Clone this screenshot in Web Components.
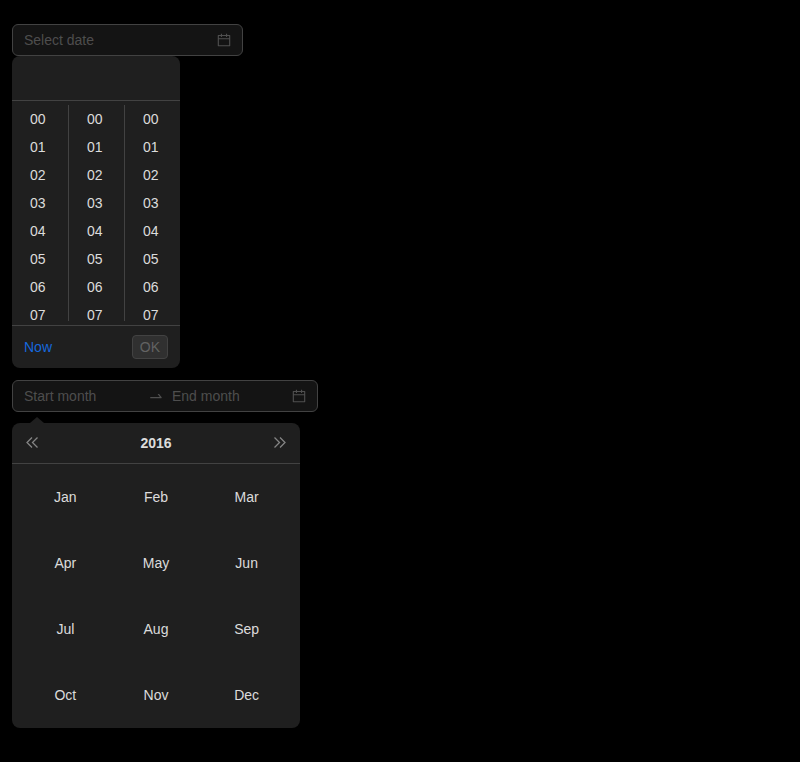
<!DOCTYPE html>
<html>
<head>
<meta charset="utf-8">
<title>Pickers</title>
<style>
    html, body { margin: 0; background: #000; }
    body {
        padding: 24px 12px;
        font: 14px/22px "Liberation Sans", Arial, sans-serif;
        color: rgba(255, 255, 255, .85);
    }
</style>
</head>
<body>

<date-input placeholder="Select date"></date-input>
<time-panel></time-panel>

<date-input start="Start month" end="End month" style="margin-top: 12px"></date-input>
<month-panel year="2016"></month-panel>

<script>
const CALENDAR = `<svg viewBox="64 64 896 896" width="14" height="14" fill="currentColor"><path d="M880 184H712v-64c0-4.4-3.6-8-8-8h-56c-4.4 0-8 3.6-8 8v64H384v-64c0-4.4-3.6-8-8-8h-56c-4.4 0-8 3.6-8 8v64H144c-17.7 0-32 14.3-32 32v664c0 17.7 14.3 32 32 32h736c17.7 0 32-14.3 32-32V216c0-17.7-14.3-32-32-32zm-40 656H184V460h656v380zM184 392V256h128v48c0 4.4 3.6 8 8 8h56c4.4 0 8-3.6 8-8v-48h256v48c0 4.4 3.6 8 8 8h56c4.4 0 8-3.6 8-8v-48h128v136H184z"/></svg>`;
const SWAP_RIGHT = `<svg viewBox="0 0 1024 1024" width="16" height="16" fill="currentColor"><path d="M873.1 596.2l-164-208A32 32 0 0 0 684 376h-64.8c-6.7 0-10.4 7.7-6.3 13l144.3 183H152c-4.4 0-8 3.6-8 8v60c0 4.4 3.6 8 8 8h695.9c26.8 0 41.7-30.8 25.2-51.8z"/></svg>`;

class DateInput extends HTMLElement {
    connectedCallback() {
        if (this.shadowRoot) return;
        const start = this.getAttribute('start');
        const end = this.getAttribute('end');
        const fields = start
            ? `<span class="field">${start}</span><span class="sep">${SWAP_RIGHT}</span><span class="field">${end}</span>`
            : `<span class="field">${this.getAttribute('placeholder')}</span>`;
        this.attachShadow({mode: 'open'});
        this.shadowRoot.innerHTML = `
            <style>
                :host {
                    display: flex;
                    align-items: center;
                    box-sizing: border-box;
                    width: ${start ? 306 : 231}px;
                    height: 32px;
                    padding: 4px 11px;
                    background: #141414;
                    border: 1px solid #424242;
                    border-radius: 6px;
                    color: rgba(255, 255, 255, .25);
                }
                .field { flex: 1; min-width: 0; }
                .sep { display: flex; padding: 0 8px; }
                .icon { display: flex; margin-left: 4px; }
            </style>
            ${fields}
            <span class="icon">${CALENDAR}</span>
        `;
    }
}

class TimePanel extends HTMLElement {
    connectedCallback() {
        if (this.shadowRoot) return;
        let cells = '';
        for (let i = 0; i < 8; i++) cells += `<li>0${i}</li>`;
        this.attachShadow({mode: 'open'});
        this.shadowRoot.innerHTML = `
            <style>
                :host {
                    display: block;
                    width: 168px;
                    background: #1f1f1f;
                    border-radius: 8px;
                }
                header { height: 44px; border-bottom: 1px solid #424242; }
                .columns { display: flex; height: 224px; }
                ul {
                    width: 56px;
                    box-sizing: border-box;
                    margin: 4px 0;
                    padding: 0;
                    list-style: none;
                    overflow: hidden;
                }
                ul + ul { border-left: 1px solid #424242; }
                li { height: 28px; line-height: 28px; padding-left: 18px; }
                footer {
                    display: flex;
                    align-items: center;
                    justify-content: space-between;
                    height: 42px;
                    padding: 0 12px;
                    border-top: 1px solid #424242;
                }
                .now { color: #1668dc; }
                .ok {
                    box-sizing: border-box;
                    height: 24px;
                    padding: 0 7px;
                    line-height: 22px;
                    color: rgba(255, 255, 255, .25);
                    background: rgba(255, 255, 255, .08);
                    border: 1px solid #424242;
                    border-radius: 4px;
                }
            </style>
            <header></header>
            <div class="columns">
                <ul>${cells}</ul>
                <ul>${cells}</ul>
                <ul>${cells}</ul>
            </div>
            <footer><span class="now">Now</span><span class="ok">OK</span></footer>
        `;
    }
}

class MonthPanel extends HTMLElement {
    connectedCallback() {
        if (this.shadowRoot) return;
        const months = ['Jan', 'Feb', 'Mar', 'Apr', 'May', 'Jun', 'Jul', 'Aug', 'Sep', 'Oct', 'Nov', 'Dec'];
        const chevrons = (d) => `<svg width="12" height="12" viewBox="0 0 12 12" fill="none" stroke="currentColor" stroke-width="1.3"><path d="${d}"/></svg>`;
        this.attachShadow({mode: 'open'});
        this.shadowRoot.innerHTML = `
            <style>
                :host {
                    display: block;
                    position: relative;
                    width: 288px;
                    margin-top: 11px;
                    background: #1f1f1f;
                    border-radius: 8px;
                }
                .arrow {
                    position: absolute;
                    left: 18px;
                    top: -6px;
                    width: 14px;
                    height: 6px;
                    background: #1f1f1f;
                    clip-path: polygon(0 100%, 50% 0, 100% 100%);
                }
                header {
                    display: flex;
                    align-items: center;
                    justify-content: space-between;
                    height: 40px;
                    padding: 0 14px;
                    border-bottom: 1px solid #424242;
                    color: rgba(255, 255, 255, .45);
                }
                header svg { display: block; }
                .year { font-weight: 700; color: rgba(255, 255, 255, .85); }
                .months {
                    display: grid;
                    grid-template-columns: repeat(3, 1fr);
                    grid-auto-rows: 66px;
                    padding: 0 8px;
                    place-items: center;
                }
            </style>
            <span class="arrow"></span>
            <header>
                ${chevrons('M6 .5 1 5.5l5 5M11.5 .5l-5 5 5 5')}
                <span class="year">${this.getAttribute('year')}</span>
                ${chevrons('M.5 .5l5 5-5 5M6 .5l5 5-5 5')}
            </header>
            <div class="months">${months.map(m => `<span>${m}</span>`).join('')}</div>
        `;
    }
}

customElements.define('date-input', DateInput);
customElements.define('time-panel', TimePanel);
customElements.define('month-panel', MonthPanel);
</script>
</body>
</html>
